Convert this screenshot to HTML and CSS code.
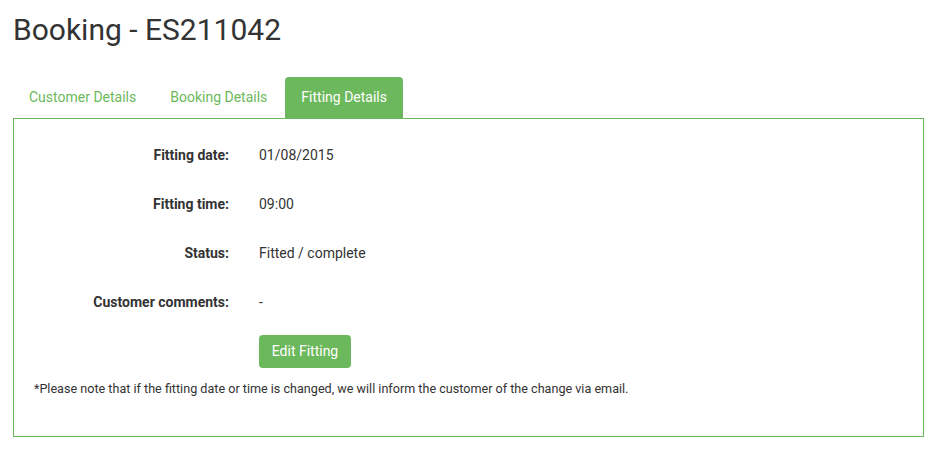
FILE: index.html
```html
<!DOCTYPE html>
<html lang="en">
<head>
<meta charset="utf-8">
<title>Booking - ES211042</title>
<link rel="stylesheet" href="styles.css">
</head>
<body>
<div class="page">
  <h1 class="title">Booking - ES211042</h1>
  <ul class="tabs">
    <li class="tab">Customer Details</li>
    <li class="tab">Booking Details</li>
    <li class="tab active">Fitting Details</li>
  </ul>
  <div class="panel">
    <div class="details">
      <div class="label">Fitting date:</div>
      <div class="value">01/08/2015</div>
      <div class="label">Fitting time:</div>
      <div class="value">09:00</div>
      <div class="label">Status:</div>
      <div class="value">Fitted / complete</div>
      <div class="label">Customer comments:</div>
      <div class="value">-</div>
      <div class="label"></div>
      <div class="value action"><button class="btn">Edit Fitting</button></div>
    </div>
    <p class="note">*Please note that if the fitting date or time is changed, we will inform the customer of the change via email.</p>
  </div>
</div>
</body>
</html>
```
FILE: styles.css
```css
html, body {
  margin: 0;
  padding: 0;
  background: #fff;
}
body {
  font-family: Roboto, "Liberation Sans", sans-serif;
  color: #333;
  font-size: 14px;
}
.page {
  padding: 0 8px 0 13px;
}
.title {
  margin: 13px 0 0 0;
  font-size: 30px;
  font-weight: 400;
  line-height: 33px;
  color: #333;
}
.tabs {
  list-style: none;
  margin: 31px 0 0 0;
  padding: 0;
  display: flex;
  gap: 2px;
}
.tab {
  height: 41px;
  line-height: 41px;
  padding: 0 16px;
  color: #6cb85c;
  border-radius: 4px 4px 0 0;
  font-size: 14px;
}
.tab.active {
  background: #6cb85c;
  color: #fff;
}
.panel {
  border: 1px solid #6cb85c;
  padding: 26px 20px 39px 20px;
}
.details {
  display: grid;
  grid-template-columns: 195px 1fr;
  column-gap: 30px;
  row-gap: 29px;
  line-height: 20px;
}
.label {
  font-weight: 700;
  text-align: right;
}
.action {
  margin-top: -6px;
}
.btn {
  font-family: inherit;
  font-size: 14px;
  color: #fff;
  background: #6cb85c;
  border: none;
  border-radius: 4px;
  height: 33px;
  width: 92px;
  padding: 0;
  line-height: 33px;
}
.note {
  margin: 12px 0 0 0;
  font-size: 12.6px;
  line-height: 17px;
}
```
